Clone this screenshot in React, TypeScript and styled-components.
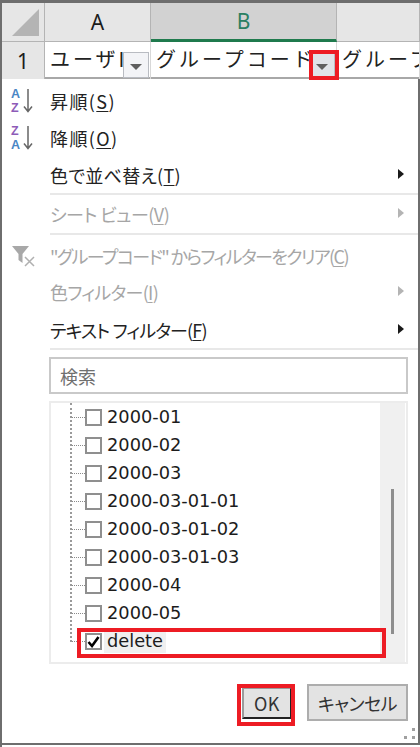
import React from "react";
import styled, { createGlobalStyle } from "styled-components";

const Global = createGlobalStyle`
  html, body { margin: 0; padding: 0; background: #fff; }
  #root { width: 420px; height: 747px; overflow: hidden; }
  * { box-sizing: border-box; }
`;

const FONT = `"Noto Sans CJK JP", "Noto Sans", sans-serif`;

const Page = styled.div`
  position: relative;
  width: 420px;
  height: 747px;
  background: #fff;
  border-top: 3px solid #6e6e6e;
  border-left: 2px solid #6e6e6e;
  font-family: ${FONT};
  color: #1c1c1c;
  overflow: hidden;
`;

const Sheet = styled.div`
  display: grid;
  grid-template-columns: 43px 106px 186px 1fr;
  grid-template-rows: 39px 37px;
  height: 76px;
  border-bottom: 2px solid #a8a8a8;
`;

const ColHead = styled.div<{ $active?: boolean }>`
  display: flex;
  align-items: center;
  justify-content: center;
  font-size: 21px;
  font-family: "Noto Sans", sans-serif;
  color: ${(p) => (p.$active ? "#2a7f62" : "#1c1c1c")};
  background: ${(p) => (p.$active ? "#d2d2d2" : "#e6e6e6")};
  border-right: 1px solid #b4b4b4;
  border-bottom: ${(p) => (p.$active ? "3px solid #1f7a4d" : "1px solid #b4b4b4")};
`;

const Corner = styled(ColHead)`
  justify-content: flex-end;
  align-items: flex-end;
  padding: 0 5px 5px 0;
`;

const RowHead = styled.div`
  display: flex;
  align-items: center;
  justify-content: center;
  background: #e6e6e6;
  border-right: 1px solid #b4b4b4;
  font-family: "Noto Sans", sans-serif;
  font-size: 21px;
`;

const Cell = styled.div`
  position: relative;
  padding: 0 0 0 5px;
  font-size: 20px;
  letter-spacing: 3px;
  line-height: 34px;
  white-space: nowrap;
  overflow: hidden;
  border-right: 1px solid #d8d8d8;
  color: #222;
`;

const FilterButton = styled.div<{ $plain?: boolean }>`
  position: absolute;
  right: 1px;
  bottom: 1px;
  width: 26px;
  height: 26px;
  display: flex;
  align-items: center;
  justify-content: center;
  background: ${(p) => (p.$plain ? "#f3f4f7" : "#e0e3e8")};
  border: 1px solid #b9bcc2;
  &::after {
    content: "";
    margin-top: 3px;
    border-left: 6px solid transparent;
    border-right: 6px solid transparent;
    border-top: 6px solid #5f5f5f;
  }
`;

const Menu = styled.div`
  height: 666px;
  border-right: 2px solid #6e6e6e;
  border-bottom: 2px solid #6e6e6e;
  padding-top: 3px;
  display: flex;
  flex-direction: column;
`;

const Item = styled.div<{ $disabled?: boolean; $h?: number; $top?: number; $track?: number }>`
  position: relative;
  display: flex;
  align-items: center;
  height: ${(p) => p.$h ?? 36}px;
  margin-top: ${(p) => p.$top ?? 0}px;
  padding-left: 48px;
  flex: none;
  font-size: 18px;
  font-feature-settings: "palt";
  letter-spacing: ${(p) => p.$track ?? 0}px;
  white-space: pre;
  color: ${(p) => (p.$disabled ? "#a6a6a6" : "#222")};
  u { text-underline-offset: 2px; }
`;

const ItemIcon = styled.span`
  position: absolute;
  left: 8px;
  top: 50%;
  transform: translateY(-50%);
  display: block;
  line-height: 0;
`;

const Arrow = styled.span<{ $disabled?: boolean }>`
  position: absolute;
  right: 14px;
  top: 50%;
  margin-top: -6px;
  border-top: 5px solid transparent;
  border-bottom: 5px solid transparent;
  border-left: 6px solid ${(p) => (p.$disabled ? "#b4b4b4" : "#1a1a1a")};
`;

const Separator = styled.div`
  height: 2px;
  flex: none;
  margin-left: 48px;
  background: #e8e8e8;
`;

const Search = styled.div`
  flex: none;
  margin: 7px 10px 0 47px;
  height: 37px;
  border: 2px solid #c9c9c9;
  padding-left: 9px;
  display: flex;
  align-items: center;
  font-size: 18px;
  color: #6f6f6f;
`;

const List = styled.div`
  position: relative;
  flex: none;
  margin: 7px 10px 0 47px;
  height: 263px;
  border: 2px solid #ececec;
  display: flex;
`;

const Tree = styled.div`
  flex: 1;
  position: relative;
  padding: 0 0 0 19px;
`;

const VLine = styled.div`
  position: absolute;
  left: 19px;
  top: 0;
  height: 239px;
  border-left: 2px dotted #9a9a9a;
`;

const Row = styled.div`
  position: relative;
  display: flex;
  align-items: center;
  height: 28px;
  padding-left: 15px;
  &::before {
    content: "";
    width: 13px;
    position: absolute;
    left: 2px;
    top: 14px;
    border-top: 1px dotted #8a8a8a;
  }
`;

const Check = styled.span`
  width: 17px;
  height: 17px;
  flex: none;
  border: 2px solid #8f8f8f;
  background: #fff;
  display: flex;
  align-items: center;
  justify-content: center;
`;

const RowLabel = styled.span<{ $selected?: boolean }>`
  margin-left: 2px;
  padding: 0 3px;
  font-family: "DejaVu Sans", sans-serif;
  font-size: 17.8px;
  line-height: 24px;
  color: #1c1c1c;
  background: ${(p) => (p.$selected ? "#f0f0f0" : "transparent")};
`;

const Scrollbar = styled.div`
  position: relative;
  width: 25px;
  flex: none;
  background: #f0f0f0;
  margin-right: 1px;
`;

const Thumb = styled.div`
  position: absolute;
  left: 11px;
  top: 86px;
  bottom: 28px;
  width: 3px;
  background: #8e8e8e;
`;

const Footer = styled.div`
  position: relative;
  flex: 1;
  display: flex;
  justify-content: flex-end;
  align-items: flex-start;
  gap: 15px;
  padding: 20px 10px 0 0;
`;

const Button = styled.div<{ $primary?: boolean }>`
  height: ${(p) => (p.$primary ? 32 : 37)}px;
  width: ${(p) => (p.$primary ? 50 : 101)}px;
  margin-top: ${(p) => (p.$primary ? 3 : 0)}px;
  display: flex;
  align-items: center;
  justify-content: center;
  background: #e3e3e3;
  font-size: 18px;
  font-feature-settings: "palt";
  letter-spacing: ${(p) => (p.$primary ? 0.5 : -0.5)}px;
  color: #333;
  border: 2px solid ${(p) => (p.$primary ? "#9a9a9a" : "#adadad")};
  ${(p) => (p.$primary ? "border-right-color:#222;border-bottom-color:#222;" : "")}
`;

const Grip = styled.span`
  position: absolute;
  right: 2px;
  bottom: 2px;
  line-height: 0;
`;

const Highlight = styled.div<{ $x: number; $y: number; $w: number; $h: number }>`
  position: absolute;
  left: ${(p) => p.$x - 2}px;
  top: ${(p) => p.$y - 3}px;
  width: ${(p) => p.$w}px;
  height: ${(p) => p.$h}px;
  border: 4px solid #ed1c24;
  pointer-events: none;
`;

const SortIcon = ({ down }: { down?: boolean }) => (
  <svg width="30" height="28" viewBox="0 0 30 28">
    <text x="1" y="11" fontSize="12.5" fontWeight="700" fontFamily="Liberation Sans, sans-serif" fill={down ? "#8e5cb8" : "#4a86c5"}>
      {down ? "Z" : "A"}
    </text>
    <text x="1" y="25" fontSize="12.5" fontWeight="700" fontFamily="Liberation Sans, sans-serif" fill={down ? "#4a86c5" : "#8e5cb8"}>
      {down ? "A" : "Z"}
    </text>
    <path d="M18 2V24M14 19.5L18 24.5L22 19.5" stroke="#666" strokeWidth="1.5" fill="none" />
  </svg>
);

const ClearIcon = () => (
  <svg width="30" height="26" viewBox="0 0 30 26">
    <path d="M2 3H19L12.5 11V20L8.5 17V11Z" fill="#a8a8a8" />
    <path d="M15 14L24 23M24 14L15 23" stroke="#b0b0b0" strokeWidth="1.5" fill="none" />
  </svg>
);

const Tick = () => (
  <svg width="13" height="13" viewBox="0 0 13 13">
    <path d="M1.5 7L5 11L11.5 2" stroke="#000" strokeWidth="2.6" fill="none" />
  </svg>
);

const rows = ["2000-01", "2000-02", "2000-03", "2000-03-01-01", "2000-03-01-02", "2000-03-01-03", "2000-04", "2000-05"];

export default function App() {
  return (
    <Page>
      <Global />
      <Sheet>
        <Corner>
          <svg width="27" height="27" viewBox="0 0 27 27">
            <path d="M27 0V27H0Z" fill="#b4b4b4" />
          </svg>
        </Corner>
        <ColHead>A</ColHead>
        <ColHead $active>B</ColHead>
        <ColHead />
        <RowHead>1</RowHead>
        <Cell>
          ユーザID
          <FilterButton $plain />
        </Cell>
        <Cell>
          グループコード
          <FilterButton />
        </Cell>
        <Cell>グループ名</Cell>
      </Sheet>
      <Menu>
        <Item $h={37} $track={1.4}>
          <ItemIcon><SortIcon /></ItemIcon>
          昇順(<u>S</u>)
        </Item>
        <Item $h={37} $track={1.4}>
          <ItemIcon><SortIcon down /></ItemIcon>
          降順(<u>O</u>)
        </Item>
        <Item $h={37} $track={0.3}>
          色で並べ替え(<u>T</u>)
          <Arrow />
        </Item>
        <Separator />
        <Item $disabled $h={38} $track={-0.5}>
          シート ビュー(<u>V</u>)
          <Arrow $disabled />
        </Item>
        <Separator />
        <Item $disabled $top={3} $track={-1.6}>
          <ItemIcon><ClearIcon /></ItemIcon>
          "グループコード" からフィルターをクリア(<u>C</u>)
        </Item>
        <Item $disabled $track={-0.7}>
          色フィルター(<u>I</u>)
          <Arrow $disabled />
        </Item>
        <Item $top={2} $track={-0.85}>
          テキスト フィルター(<u>F</u>)
          <Arrow />
        </Item>
        <Separator />
        <Search>検索</Search>
        <List>
          <Tree>
            <VLine />
            {rows.map((r) => (
              <Row key={r}>
                <Check />
                <RowLabel>{r}</RowLabel>
              </Row>
            ))}
            <Row>
              <Check><Tick /></Check>
              <RowLabel $selected>delete</RowLabel>
            </Row>
          </Tree>
          <Scrollbar><Thumb /></Scrollbar>
        </List>
        <Footer>
          <Button $primary>OK</Button>
          <Button>キャンセル</Button>
          <Grip>
            <svg width="14" height="14" viewBox="0 0 14 14">
              <g fill="#a0a0a0">
                <rect x="10" y="1" width="3" height="3" />
                <rect x="10" y="9" width="3" height="3" />
                <rect x="2" y="9" width="3" height="3" />
              </g>
            </svg>
          </Grip>
        </Footer>
      </Menu>
      <Highlight $x={309} $y={50} $w={30} $h={30} />
      <Highlight $x={77} $y={628} $w={309} $h={30} />
      <Highlight $x={237} $y={684} $w={58} $h={42} />
    </Page>
  );
}
